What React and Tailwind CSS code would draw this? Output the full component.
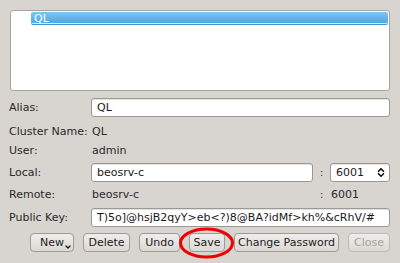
import { ChevronDown } from "lucide-react";

function Btn({ children, w, disabled }) {
    return (
        <div
            className={`h-[19px] flex items-center justify-center whitespace-nowrap rounded-[4px] border bg-gradient-to-b from-[#efedeb] to-[#dcd8d4] ${
                disabled ? "border-[#bdb9b5] text-[#a6a3a0]" : "border-[#9e9a96] text-[#222]"
            }`}
            style={{ width: w }}
        >
            {children}
        </div>
    );
}

function Label({ children }) {
    return <div className="w-[82px] shrink-0 whitespace-nowrap text-[#2a2a2a]">{children}</div>;
}

function Field({ children, className = "" }) {
    return (
        <div
            className={`h-[19px] flex items-center px-[5px] bg-white border border-[#9c9894] rounded-[3px] shadow-[inset_0_1px_0_#e4e2e0] text-[#1a1a1a] whitespace-nowrap ${className}`}
        >
            {children}
        </div>
    );
}

export default function App() {
    return (
        <div
            className="relative w-[400px] h-[263px] bg-[#d8d4d0] text-[11px] leading-[13px] overflow-hidden"
            style={{ fontFamily: '"DejaVu Sans", sans-serif' }}
        >
            <div className="pt-[10px] px-[10px]">
                {/* list */}
                <div className="h-[81px] bg-white border border-[#a8a4a0] rounded-[3px] pt-[1px] pl-[20px] pr-[1px]">
                    <div className="h-[13px] flex items-center pl-[3px] rounded-[2px] bg-gradient-to-b from-[#7cc6f4] to-[#4aa4df] border-b border-[#3d96d3] shadow-[inset_0_-1px_0_#d6ecfa] text-white">
                        QL
                    </div>
                </div>
            </div>

            <div className="pl-[9px] pr-[10px] pt-[7px]">
                <div className="h-[19px] flex items-center">
                    <Label>Alias:</Label>
                    <Field className="flex-1">QL</Field>
                </div>
                <div className="h-[19px] mt-[5px] flex items-center">
                    <Label>Cluster Name:</Label>
                    <div className="pl-[1px] text-[#2a2a2a]">QL</div>
                </div>
                <div className="h-[18px] flex items-center">
                    <Label>User:</Label>
                    <div className="pl-[1px] text-[#2a2a2a]">admin</div>
                </div>
                <div className="h-[19px] mt-[4px] flex items-center">
                    <Label>Local:</Label>
                    <Field className="w-[222px]">beosrv-c</Field>
                    <div className="w-[17px] text-center text-[#444]">:</div>
                    <Field className="flex-1 justify-between pr-[3px]">
                        <span>6001</span>
                        <span className="flex flex-col -space-y-[5px] text-[#111]">
                            <ChevronDown size={10} strokeWidth={4} className="rotate-180" />
                            <ChevronDown size={10} strokeWidth={4} />
                        </span>
                    </Field>
                </div>
                <div className="h-[18px] mt-[3px] flex items-center">
                    <Label>Remote:</Label>
                    <div className="w-[222px] pl-[1px] text-[#2a2a2a]">beosrv-c</div>
                    <div className="w-[17px] text-center text-[#444]">:</div>
                    <div className="pl-[1px] text-[#2a2a2a]">6001</div>
                </div>
                <div className="h-[19px] mt-[5px] flex items-center">
                    <Label>Public Key:</Label>
                    <Field className="flex-1 overflow-hidden">T)5o]@hsjB2qyY&gt;eb&lt;?)8@BA?idMf&gt;kh%&amp;cRhV/#</Field>
                </div>
                <div className="mt-[6px] flex items-center justify-end gap-[9px]">
                    <Btn w={44}>
                        <span className="relative">
                            New
                            <ChevronDown size={8} strokeWidth={4} className="absolute -right-[8px] top-[7px] text-[#111]" />
                        </span>
                    </Btn>
                    <Btn w={47}>Delete</Btn>
                    <Btn w={41}>Undo</Btn>
                    <Btn w={36}>Save</Btn>
                    <Btn w={105}>Change Password</Btn>
                    <Btn w={42} disabled>Close</Btn>
                </div>
            </div>

            {/* red annotation */}
            <svg className="absolute left-0 top-0 pointer-events-none" width="400" height="263">
                <ellipse cx="206.5" cy="243" rx="26" ry="14" fill="none" stroke="#ee0000" strokeWidth="3" />
            </svg>
        </div>
    );
}
